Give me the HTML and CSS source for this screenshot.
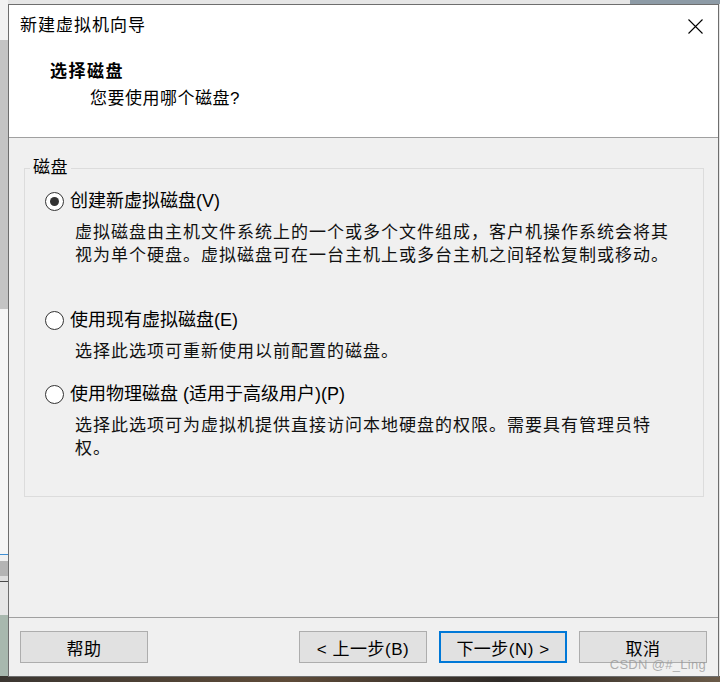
FILE: index.html
```html
<!DOCTYPE html>
<html lang="zh-CN">
<head>
<meta charset="utf-8">
<title>新建虚拟机向导</title>
<link rel="stylesheet" href="styles.css">
</head>
<body>
<div class="dialog">
  <header class="header">
    <div class="titlebar">
      <span class="title">新建虚拟机向导</span>
      <span class="close" aria-label="关闭">
        <svg width="15" height="15" viewBox="0 0 15 15"><path d="M0.5 0.5L14.5 14.5M14.5 0.5L0.5 14.5" stroke="#000" stroke-width="1.1" fill="none"/></svg>
      </span>
    </div>
    <div class="step-title">选择磁盘</div>
    <div class="step-sub">您要使用哪个磁盘?</div>
  </header>
  <main class="body">
    <fieldset class="group">
      <legend class="legend">磁盘</legend>
      <div class="options">
        <div class="opt opt-tall">
          <label class="radio-row"><span class="radio checked"></span><span class="radio-label">创建新虚拟磁盘(V)</span></label>
          <p class="desc">虚拟磁盘由主机文件系统上的一个或多个文件组成，客户机操作系统会将其视为单个硬盘。虚拟磁盘可在一台主机上或多台主机之间轻松复制或移动。</p>
        </div>
        <div class="opt">
          <label class="radio-row"><span class="radio"></span><span class="radio-label">使用现有虚拟磁盘(E)</span></label>
          <p class="desc">选择此选项可重新使用以前配置的磁盘。</p>
        </div>
        <div class="opt">
          <label class="radio-row"><span class="radio"></span><span class="radio-label">使用物理磁盘 (适用于高级用户)(P)</span></label>
          <p class="desc">选择此选项可为虚拟机提供直接访问本地硬盘的权限。需要具有管理员特权。</p>
        </div>
      </div>
    </fieldset>
  </main>
  <footer class="footer">
    <button class="btn">帮助</button>
    <span class="spacer"></span>
    <button class="btn">&lt; 上一步(B)</button>
    <button class="btn btn-default">下一步(N) &gt;</button>
    <button class="btn">取消</button>
  </footer>
  <span class="watermark">CSDN @#_Ling</span>
</div>
</body>
</html>
```
FILE: styles.css
```css
html, body {
  margin: 0;
  height: 682px;
  overflow: hidden;
}
body {
  font-family: "Liberation Sans", "Noto Sans CJK SC", sans-serif;
  color: #000;
  background:
    linear-gradient(#8d9ba6, #8d9ba6) right top / 90px 4px no-repeat,
    linear-gradient(90deg, #3b3631, #5e4b38 40%, #2e2a27 70%, #6a5a48) left bottom / 100% 6px no-repeat,
    linear-gradient(to bottom, #f2f2f2 0 40px, #c4c4c4 40px 309px, #f5f5f5 309px 554px, #3f8fd4 554px 555px, #f0f0f0 555px 561px, #b4b4b4 561px 576px, #dedede 576px 581px, #4a4a4a 581px 582px, #e6e6e6 582px 615px, #a8b8ae 615px) left top / 8px 100% no-repeat,
    #e6e6e6;
}
.dialog {
  position: relative;
  margin: 4px 0 0 8px;
  width: 711px;
  height: 673px;
  box-sizing: border-box;
  border: 1px solid #6e6e6e;
  background: #f0f0f0;
  display: flex;
  flex-direction: column;
}
.header {
  background: #fff;
  height: 133px;
  box-sizing: border-box;
  border-bottom: 1px solid #a0a0a0;
  flex: none;
}
.titlebar {
  height: 42px;
  display: flex;
  align-items: center;
  justify-content: space-between;
  padding: 0 15px 0 11px;
}
.title {
  font-size: 17px;
  letter-spacing: 1px;
  line-height: 24px;
}
.close {
  display: flex;
  width: 15px;
  height: 15px;
}
.step-title {
  margin-top: 13px;
  padding-left: 41px;
  font-size: 17px;
  font-weight: bold;
  letter-spacing: 1.5px;
  line-height: 24px;
}
.step-sub {
  margin-top: 3px;
  padding-left: 81px;
  font-size: 17px;
  letter-spacing: 0.5px;
  line-height: 24px;
}
.body {
  flex: 1;
  padding: 20px 14px 0 15px;
}
.group {
  margin: 0;
  padding: 11px 0 36px 0;
  border: 1px solid #dcdcdc;
}
.legend {
  margin-left: 5px;
  padding: 0 3px;
  font-size: 17px;
  letter-spacing: 0.5px;
  line-height: 20px;
}
.options {
  display: flex;
  flex-direction: column;
  gap: 19px;
  padding-left: 20px;
}
.radio-row {
  display: flex;
  align-items: center;
  gap: 6px;
  height: 24px;
}
.radio {
  width: 19px;
  height: 19px;
  box-sizing: border-box;
  border: 1.5px solid #333;
  border-radius: 50%;
  background: #fff;
  display: flex;
  align-items: center;
  justify-content: center;
}
.radio.checked::after {
  content: "";
  width: 9px;
  height: 9px;
  border-radius: 50%;
  background: #333;
}
.radio-label {
  font-size: 18px;
  line-height: 24px;
}
.desc {
  margin: 8px 0 0 30px;
  width: 602px;
  font-size: 17px;
  letter-spacing: 1px;
  line-height: 23px;
  color: #111;
}
.opt-tall .desc {
  min-height: 68px;
}
.footer {
  flex: none;
  height: 59px;
  box-sizing: border-box;
  border-top: 1px solid #a0a0a0;
  padding: 13px 11px 0 11px;
  display: flex;
  align-items: flex-start;
  gap: 12px;
}
.spacer {
  flex: 1;
}
.btn {
  width: 128px;
  height: 32px;
  box-sizing: border-box;
  border: 1px solid #adadad;
  background: #e1e1e1;
  font-family: "Liberation Sans", "Noto Sans CJK SC", sans-serif;
  font-size: 17px;
  letter-spacing: 0.5px;
  color: #000;
  padding: 0;
}
.btn-default {
  border: 2px solid #0078d7;
}
.watermark {
  position: absolute;
  right: 12px;
  bottom: 4px;
  font-size: 13px;
  color: rgba(150, 150, 150, 0.75);
  letter-spacing: 0.3px;
}
```
